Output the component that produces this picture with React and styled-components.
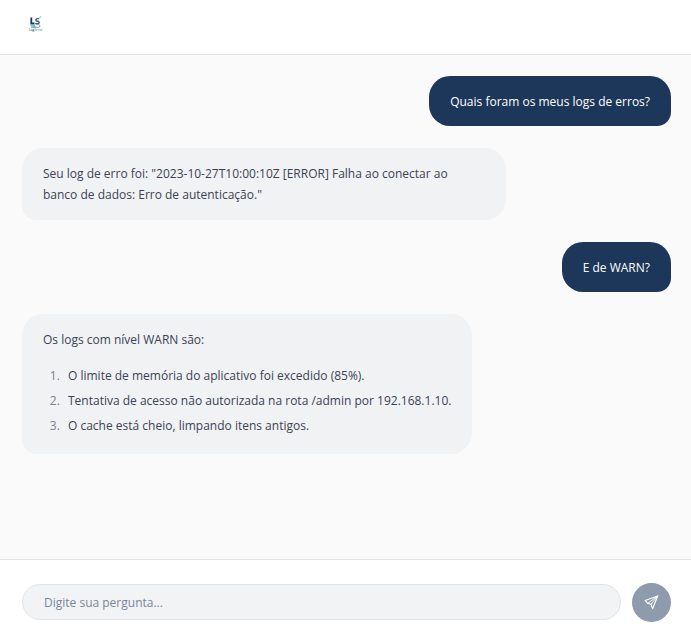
import React, { useState } from "react";
import styled, { createGlobalStyle } from "styled-components";

const GlobalStyle = createGlobalStyle`
  *, *::before, *::after { box-sizing: border-box; }
  body {
    margin: 0;
    background: #fafafa;
    color: #3b4254;
    font-family: "Segoe UI", "Open Sans", "Noto Sans", sans-serif;
    font-size: 12px;
    line-height: 21px;
  }
`;

const Page = styled.div`
  display: flex;
  flex-direction: column;
  min-height: 100vh;
`;

const Header = styled.header`
  display: flex;
  align-items: flex-start;
  height: 55px;
  padding: 16px 28px;
  background: #ffffff;
  border-bottom: 1px solid #e2e4e9;
`;

const Messages = styled.main`
  flex: 1;
  display: flex;
  flex-direction: column;
  gap: 22px;
  padding: 21px 20px 21px 22px;
`;

const Bubble = styled.div`
  max-width: 484px;
  align-self: ${(p) => (p.$user ? "flex-end" : "flex-start")};
  padding: ${(p) => (p.$user ? "15px 21px 14px" : "15px 21px")};
  border-radius: ${(p) => (p.$user ? "21px 21px 14px 21px" : "21px 21px 21px 14px")};
  background: ${(p) => (p.$user ? "#1c3759" : "#f1f2f4")};
  color: ${(p) => (p.$user ? "#ffffff" : "#3b4254")};
`;

const Text = styled.p`
  margin: 0;
`;

const List = styled.ol`
  display: flex;
  flex-direction: column;
  gap: 4px;
  margin: 15px 0 3px;
  padding-left: 20px;
`;

const Item = styled.li`
  padding-left: 5px;
  &::marker { color: #7b818d; }
`;

const Composer = styled.form`
  display: flex;
  align-items: center;
  gap: 11px;
  height: 78px;
  padding: 7px 20px 0 22px;
  background: #ffffff;
  border-top: 1px solid #e2e4e9;
`;

const Input = styled.input`
  flex: 1;
  min-width: 0;
  height: 36px;
  padding: 0 21px;
  border: 1px solid #e0e3e9;
  border-radius: 18px;
  background: #f2f3f5;
  color: #3b4254;
  font: inherit;
  &::placeholder { color: #7886a0; opacity: 1; }
`;

const SendButton = styled.button`
  display: flex;
  align-items: center;
  justify-content: center;
  width: 39px;
  height: 39px;
  padding: 0;
  border: 0;
  border-radius: 50%;
  background: #8e9bac;
  color: #ffffff;
`;

const LogoText = styled.text`
  font-family: "Open Sans", sans-serif;
  font-size: 3px;
  font-weight: 600;
`;

function Logo() {
  return (
    <svg width="16" height="17" viewBox="0 0 16 17" role="img" aria-label="LogSense">
      <path d="M3.3 1.5v6h3.2" fill="none" stroke="#17375f" strokeWidth="1.8" />
      <path d="M11 2.600H9.300q-1.400 0-1.400 1.300t1.400 1.300h.6q1.200 0 1.200 1.200T9.700 7.600H7.200" fill="none" stroke="#345d82" strokeWidth="1.400" />
      <path d="M11.300 2.500l1.400-2" stroke="#39aeb5" strokeWidth="1" />
      <path d="M2.500 9.200h4.500M3 11h4.500" stroke="#6db0be" strokeWidth="1.300" />
      <path d="M8 8.500h2q2 0 2 1.400t-2 1.400H5" fill="none" stroke="#7f9db4" strokeWidth="1" />
      <LogoText x="1" y="15" fill="#355674">
        Log<tspan fill="#63b2bb">Sense</tspan>
      </LogoText>
    </svg>
  );
}

function PlaneIcon() {
  return (
    <svg width="15" height="15" viewBox="0 0 15 15" fill="none" stroke="currentColor" strokeWidth="1.1" strokeLinejoin="round" strokeLinecap="round" aria-hidden="true">
      <path d="M13.700 1L1.200 5.600l2.500 2.700 3.300 1 1.600 4.400z" />
      <path d="M13.700 1L3.700 8.300M13.700 1L7 9.300" strokeWidth="0.900" />
    </svg>
  );
}

const warnings = [
  "O limite de memória do aplicativo foi excedido (85%).",
  "Tentativa de acesso não autorizada na rota /admin por 192.168.1.10.",
  "O cache está cheio, limpando itens antigos.",
];

export default function App() {
  const [question, setQuestion] = useState("");
  return (
    <>
      <GlobalStyle />
      <Page>
        <Header><Logo /></Header>
        <Messages>
          <Bubble $user><Text>Quais foram os meus logs de erros?</Text></Bubble>
          <Bubble>
            <Text>
              Seu log de erro foi: "2023-10-27T10:00:10Z [ERROR] Falha ao conectar ao banco de dados: Erro de autenticação."
            </Text>
          </Bubble>
          <Bubble $user><Text>E de WARN?</Text></Bubble>
          <Bubble>
            <Text>Os logs com nível WARN são:</Text>
            <List>{warnings.map((w) => <Item key={w}>{w}</Item>)}</List>
          </Bubble>
        </Messages>
        <Composer onSubmit={(e) => e.preventDefault()}>
          <Input
            aria-label="Pergunta"
            placeholder="Digite sua pergunta..."
            value={question}
            onChange={(e) => setQuestion(e.target.value)}
          />
          <SendButton type="submit" aria-label="Enviar"><PlaneIcon /></SendButton>
        </Composer>
      </Page>
    </>
  );
}
